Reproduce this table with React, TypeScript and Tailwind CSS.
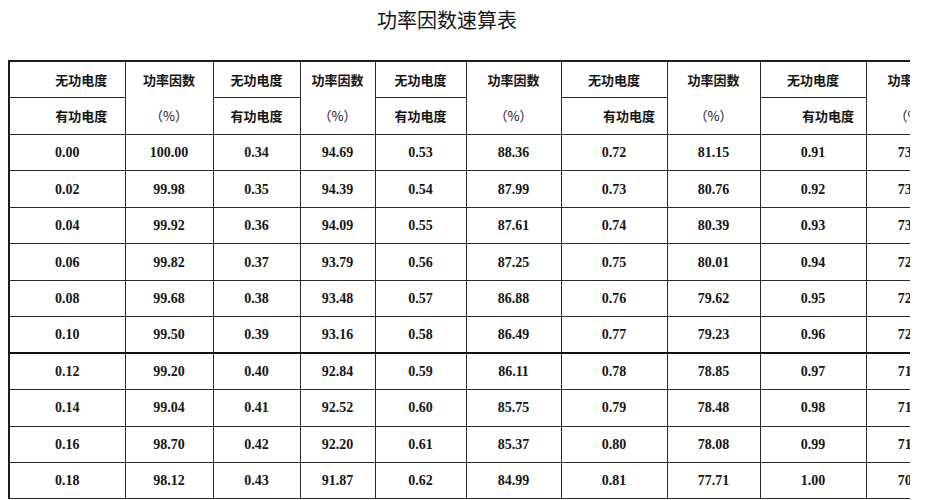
const widths = [116, 88, 87, 75, 91, 95, 106, 93, 106, 95];

// each pair: reactive/active ratio, power factor (%)
const pairs: [string, string][][] = [
  [["0.00", "100.00"], ["0.02", "99.98"], ["0.04", "99.92"], ["0.06", "99.82"], ["0.08", "99.68"], ["0.10", "99.50"], ["0.12", "99.20"], ["0.14", "99.04"], ["0.16", "98.70"], ["0.18", "98.12"]],
  [["0.34", "94.69"], ["0.35", "94.39"], ["0.36", "94.09"], ["0.37", "93.79"], ["0.38", "93.48"], ["0.39", "93.16"], ["0.40", "92.84"], ["0.41", "92.52"], ["0.42", "92.20"], ["0.43", "91.87"]],
  [["0.53", "88.36"], ["0.54", "87.99"], ["0.55", "87.61"], ["0.56", "87.25"], ["0.57", "86.88"], ["0.58", "86.49"], ["0.59", "86.11"], ["0.60", "85.75"], ["0.61", "85.37"], ["0.62", "84.99"]],
  [["0.72", "81.15"], ["0.73", "80.76"], ["0.74", "80.39"], ["0.75", "80.01"], ["0.76", "79.62"], ["0.77", "79.23"], ["0.78", "78.85"], ["0.79", "78.48"], ["0.80", "78.08"], ["0.81", "77.71"]],
  [["0.91", "73.96"], ["0.92", "73.59"], ["0.93", "73.23"], ["0.94", "72.86"], ["0.95", "72.50"], ["0.96", "72.14"], ["0.97", "71.78"], ["0.98", "71.42"], ["0.99", "71.07"], ["1.00", "70.71"]],
];

// extra left padding of the two header labels per pair (top, bottom)
const headPad = [
  ["pl-[28px]", "pl-[28px]"],
  ["", ""],
  ["", ""],
  ["", "pl-[30px]"],
  ["", "pl-[30px]"],
];

const cjk = "font-['Noto_Sans_CJK_SC',sans-serif]";
const num = "font-['Liberation_Serif',serif] font-bold text-[14px]";

export default function App() {
  return (
    <div className="w-[949px] h-[500px] bg-white text-[#151515] overflow-hidden">
      <div className={`h-[60px] w-[894px] pt-[6px] text-center text-[20px] leading-[28px] ${cjk}`}>
        功率因数速算表
      </div>
      <div className="ml-[8px] w-[902px] overflow-hidden">
        <table className="table-fixed border-collapse w-[952px] border-t-2 border-l-2 border-[#1e1e1e]">
          <colgroup>
            {widths.map((w, i) => (
              <col key={i} style={{ width: w }} />
            ))}
          </colgroup>
          <thead>
            <tr className="h-[36px]">
              {pairs.map((_, p) => [
                <th key={`a${p}`} className={`border border-[#2a2a2a] text-center text-[13px] font-semibold ${cjk} ${headPad[p][0]}`}>
                  无功电度
                </th>,
                <th key={`b${p}`} rowSpan={2} className={`border border-[#2a2a2a] p-0 text-[13px] font-semibold ${cjk}`}>
                  <div className="flex flex-col">
                    <div className="h-[36px] flex items-center justify-center">功率因数</div>
                    <div className="h-[36px] flex items-center justify-center font-normal">（%）</div>
                  </div>
                </th>,
              ])}
            </tr>
            <tr className="h-[36px]">
              {pairs.map((_, p) => (
                <th key={p} className={`border border-[#2a2a2a] text-center text-[13px] font-semibold ${cjk} ${headPad[p][1]}`}>
                  有功电度
                </th>
              ))}
            </tr>
          </thead>
          <tbody>
            {pairs[0].map((_, r) => (
              <tr key={r} className="h-[36.45px]">
                {pairs.map((col, p) => [
                  <td key={`a${p}`} className={`border border-[#2a2a2a] text-center ${num} ${r === 6 ? "border-t-2 border-t-[#111]" : ""}`}>
                    {col[r][0]}
                  </td>,
                  <td key={`b${p}`} className={`border border-[#2a2a2a] text-center ${num} ${r === 6 ? "border-t-2 border-t-[#111]" : ""}`}>
                    {col[r][1]}
                  </td>,
                ])}
              </tr>
            ))}
          </tbody>
        </table>
      </div>
    </div>
  );
}
